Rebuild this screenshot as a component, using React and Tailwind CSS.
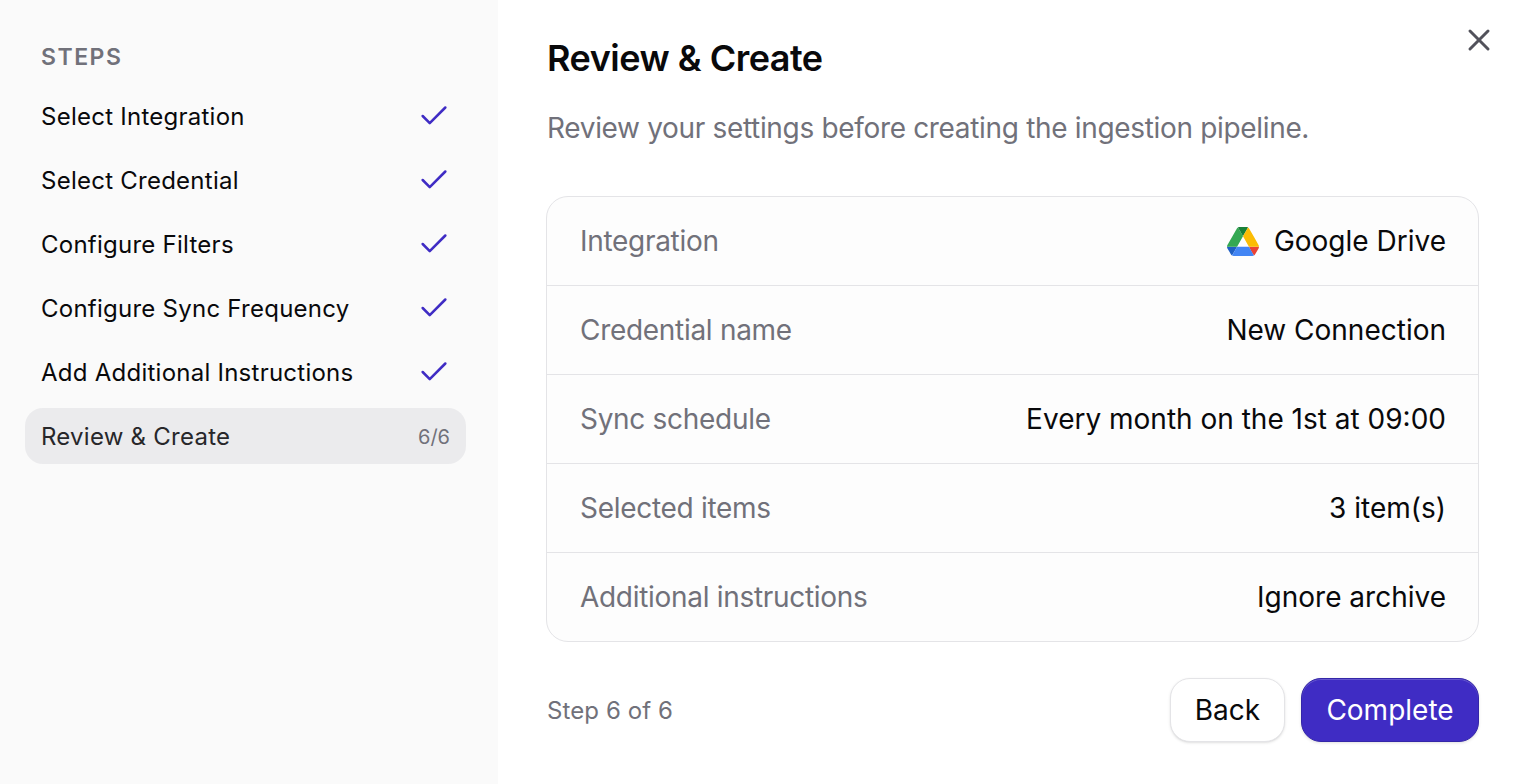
import { Check, X } from 'lucide-react';

const steps = [
  'Select Integration',
  'Select Credential',
  'Configure Filters',
  'Configure Sync Frequency',
  'Add Additional Instructions',
];

const rows = [
  { label: 'Integration', value: 'Google Drive', icon: true, height: 'h-[88px]' },
  { label: 'Credential name', value: 'New Connection', height: 'h-[89px]' },
  { label: 'Sync schedule', value: 'Every month on the 1st at 09:00', height: 'h-[89px]' },
  { label: 'Selected items', value: '3 item(s)', height: 'h-[89px]' },
  { label: 'Additional instructions', value: 'Ignore archive', height: 'h-[89px]' },
];

const DriveIcon = () => (
  <svg width="32" height="29" viewBox="0 0 87.3 78" preserveAspectRatio="none">
    <path d="m6.6 66.85 3.85 6.65c.8 1.4 1.95 2.5 3.3 3.3l13.75-23.8h-27.5c0 1.55.4 3.1 1.2 4.5z" fill="#1f5fc4" />
    <path d="m43.65 25-13.75-23.8c-1.35.8-2.5 1.9-3.3 3.3l-25.4 44a9.06 9.06 0 0 0-1.2 4.5h27.5z" fill="#34a853" />
    <path d="m73.55 76.8c1.35-.8 2.5-1.9 3.3-3.3l1.6-2.75 7.65-13.25c.8-1.4 1.2-2.95 1.2-4.5h-27.502l5.852 11.5z" fill="#ea4335" />
    <path d="m43.65 25 13.75-23.8c-1.35-.8-2.9-1.2-4.5-1.2h-18.5c-1.6 0-3.15.45-4.5 1.2z" fill="#188038" />
    <path d="m59.8 53h-32.3l-13.75 23.8c1.35.8 2.9 1.2 4.5 1.2h50.8c1.6 0 3.15-.45 4.5-1.2z" fill="#4285f4" />
    <path d="m73.4 26.5-12.7-22c-.8-1.4-1.95-2.5-3.3-3.3l-13.75 23.8 16.15 28h27.45c0-1.55-.4-3.1-1.2-4.5z" fill="#fbbc04" />
  </svg>
);

export default function App() {
  return (
    <div className="flex h-[784px] bg-white font-['Inter',sans-serif] overflow-hidden">
      {/* Sidebar */}
      <div className="w-[498px] shrink-0 bg-[#fafafa] pl-[25px] pr-8 pt-[41px]">
        <div className="pl-4 text-[23px] leading-8 font-semibold tracking-[1.5px] text-[#71717a]">STEPS</div>
        <div className="mt-[15px] flex flex-col gap-2">
          {steps.map((step) => (
            <div key={step} className="flex h-14 items-center justify-between pl-4 pr-4">
              <span className="mt-[2px] text-[24px] font-[430] tracking-[0.25px] text-[#09090b]">{step}</span>
              <Check size={34} strokeWidth={1.8} className="-mr-px text-[#3f2cc4]" />
            </div>
          ))}
          <div className="flex h-14 items-center justify-between rounded-[18px] bg-[#ebebed] pl-4 pr-4">
            <span className="mt-[2px] text-[24px] font-[430] tracking-[0.25px] text-[#27272a]">Review &amp; Create</span>
            <span className="mt-[2px] text-[20px] font-normal text-[#71717a]">6/6</span>
          </div>
        </div>
      </div>

      {/* Main */}
      <div className="relative flex-1 pl-[48px] pr-[41px] pt-[34px]">
        <button className="absolute right-[23px] top-[22px] text-[#52525b]">
          <X size={36} strokeWidth={2} />
        </button>
        <h1 className="pl-px text-[36px] leading-[48px] font-semibold text-[#09090b] tracking-[-0.5px]">Review &amp; Create</h1>
        <p className="mt-[28px] pl-px text-[28px] leading-[36px] tracking-[-0.33px] text-[#71717a]">Review your settings before creating the ingestion pipeline.</p>

        <div className="mt-[50px] overflow-hidden rounded-[22px] border border-[#e4e4e7] bg-[#fdfdfd]">
          {rows.map((row, i) => (
            <div
              key={row.label}
              className={`flex ${row.height} items-center justify-between pl-[33px] pr-[32px] ${i > 0 ? 'border-t border-[#e4e4e7]' : ''}`}
            >
              <span className="text-[28px] tracking-[-0.3px] text-[#71717a]">{row.label}</span>
              <span className="flex items-center gap-[15px] text-[28px] font-[430] text-[#09090b]">
                {row.icon && <DriveIcon />}
                {row.value}
              </span>
            </div>
          ))}
        </div>

        <div className="mt-[36px] flex items-center justify-between">
          <span className="mt-[2px] pl-px text-[24px] tracking-[0.1px] text-[#71717a]">Step 6 of 6</span>
          <div className="flex gap-4">
            <button className="h-16 w-[115px] rounded-[20px] border border-[#e4e4e7] bg-white text-[28px] font-[430] text-[#09090b] shadow-sm">Back</button>
            <button className="h-16 w-[178px] rounded-[20px] border border-[#3426a8] bg-[#3f2cc4] text-[28px] font-[430] text-white shadow-[inset_0_1px_0_rgba(255,255,255,0.2),0_1px_3px_rgba(0,0,0,0.12)]">Complete</button>
          </div>
        </div>
      </div>
    </div>
  );
}
